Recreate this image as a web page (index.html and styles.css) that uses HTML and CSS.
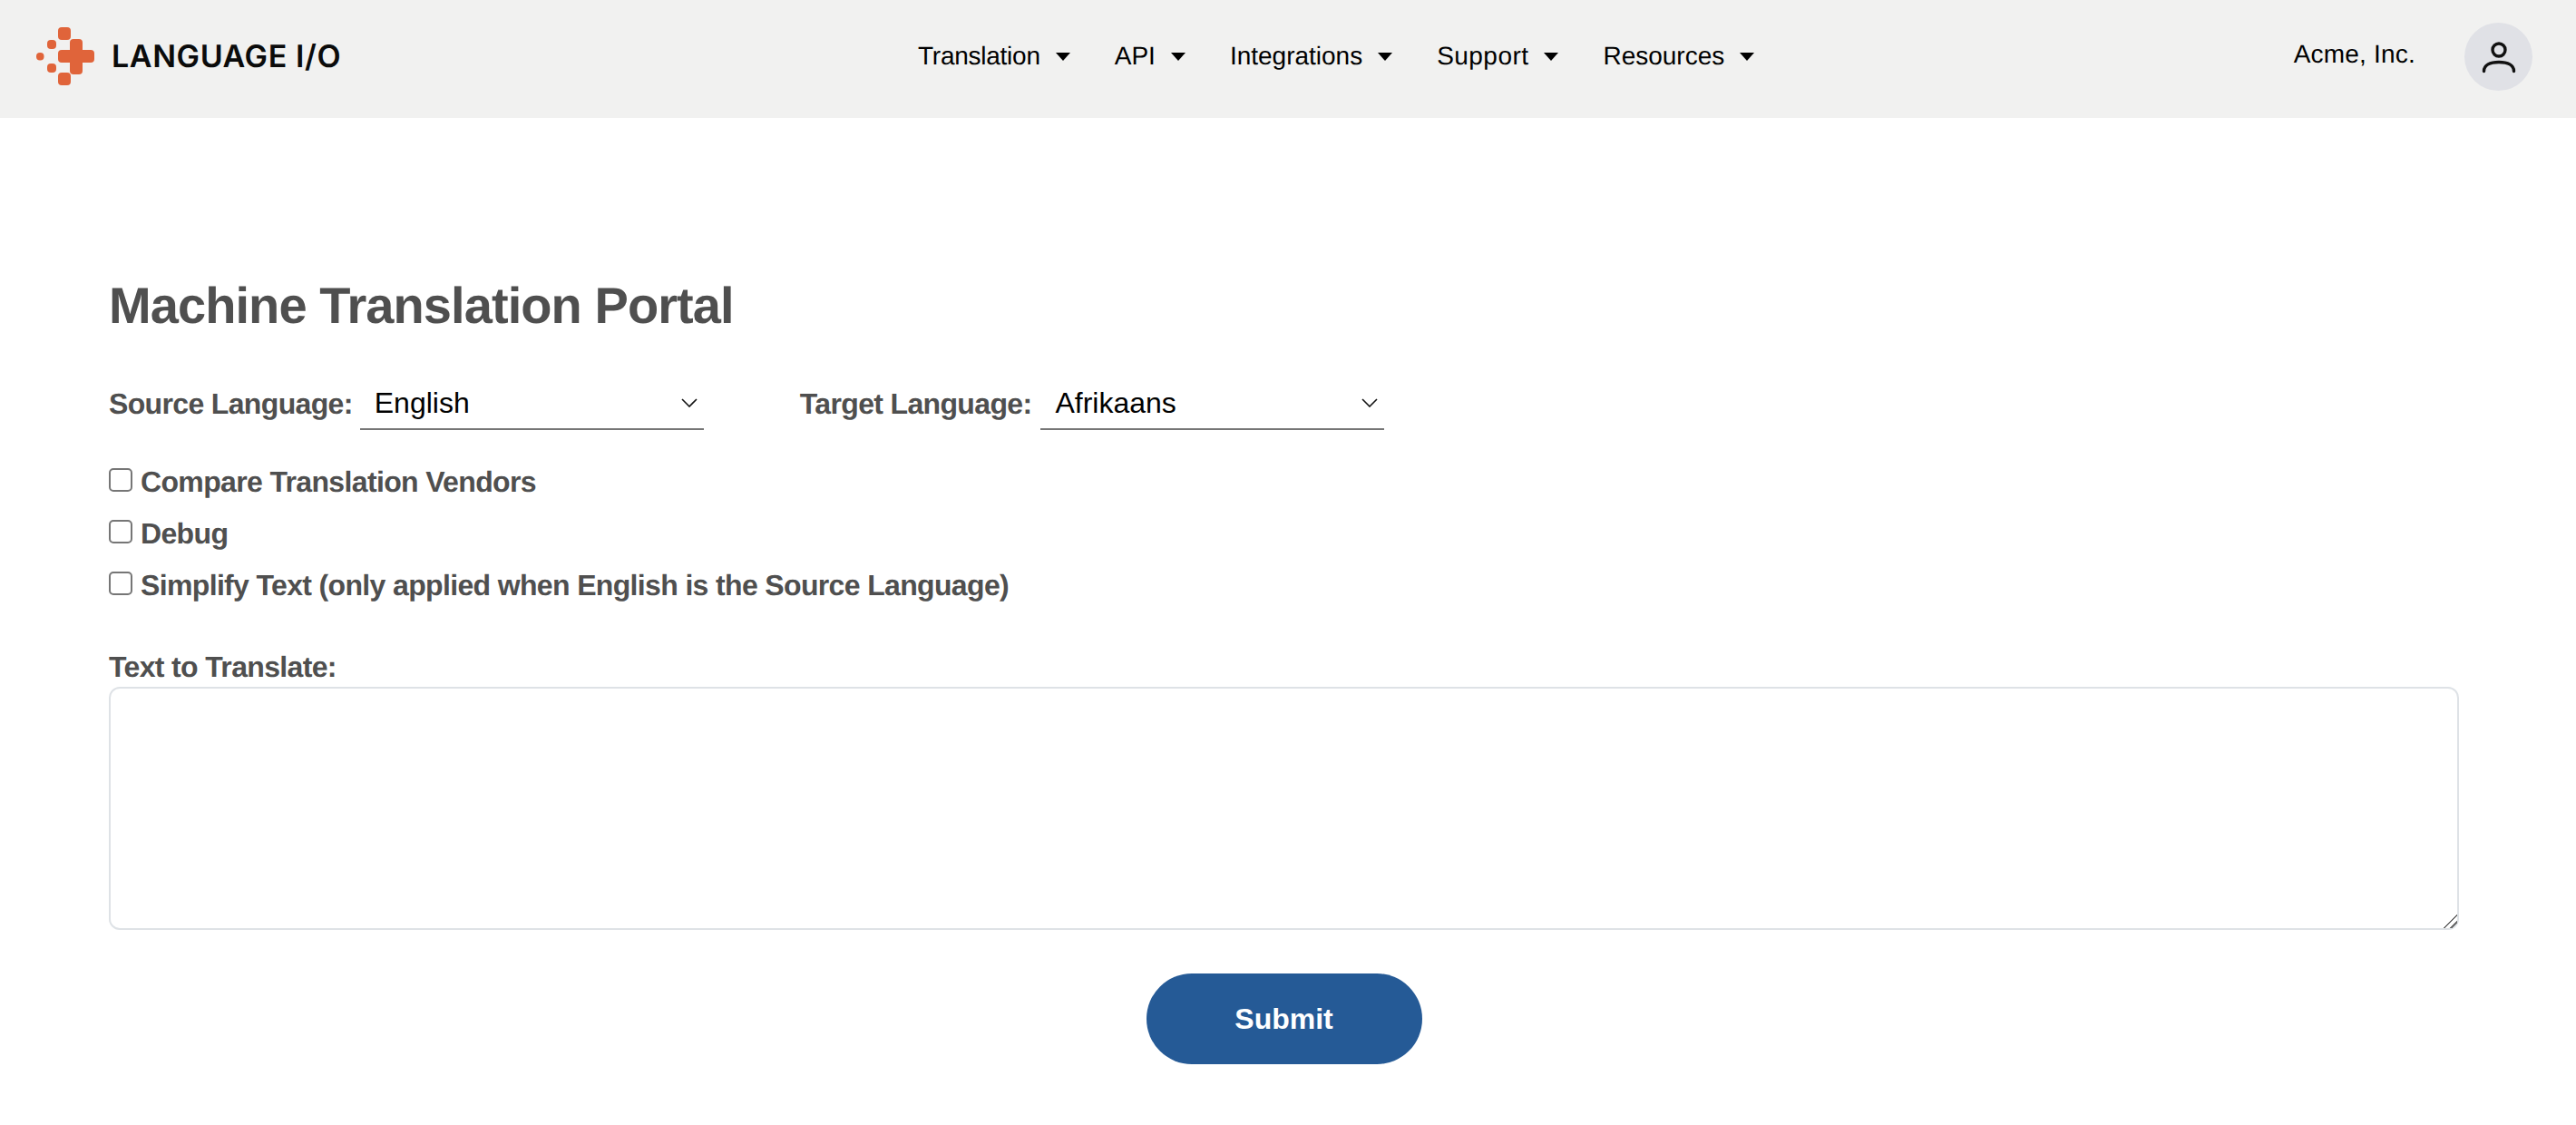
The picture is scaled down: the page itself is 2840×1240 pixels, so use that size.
FILE: index.html
```html
<!DOCTYPE html>
<html lang="en">
<head>
<meta charset="utf-8">
<title>Machine Translation Portal</title>
<link rel="stylesheet" href="styles.css">
</head>
<body>
<header class="topbar">
  <a class="brand" href="#">
    <svg class="brand-mark" width="64" height="64" viewBox="40 30 64 64" aria-hidden="true">
      <g fill="#e0643a">
        <rect x="64" y="30" width="14" height="14" rx="4"/>
        <rect x="64" y="80" width="14" height="14" rx="4"/>
        <rect x="77" y="43" width="14" height="39" rx="4"/>
        <rect x="64" y="55" width="40" height="14" rx="4"/>
        <rect x="52" y="44" width="10" height="10" rx="4"/>
        <rect x="52" y="70" width="10" height="10" rx="4"/>
        <rect x="40" y="58" width="8.5" height="8.5" rx="4"/>
      </g>
    </svg>
    <span class="brand-name">LANGUAGE I/O</span>
  </a>
  <nav class="nav">
    <a class="nav-item nav-item-tight" href="#">Translation<i class="caret"></i></a>
    <a class="nav-item" href="#">API<i class="caret"></i></a>
    <a class="nav-item" href="#">Integrations<i class="caret"></i></a>
    <a class="nav-item nav-item-wide" href="#">Support<i class="caret"></i></a>
    <a class="nav-item" href="#">Resources<i class="caret"></i></a>
  </nav>
  <div class="account">
    <span class="org">Acme, Inc.</span>
    <span class="avatar">
      <svg width="40" height="40" viewBox="0 0 40 40" fill="none" stroke="#111" stroke-width="3.4" stroke-linecap="round" aria-hidden="true">
        <circle cx="20" cy="13" r="7"/>
        <path d="M3.5 36.5C3.5 30 10 26.5 20 26.5S36.5 30 36.5 36.5"/>
      </svg>
    </span>
  </div>
</header>

<main class="content">
  <h1 class="title">Machine Translation Portal</h1>
  <form class="form">
    <div class="languages">
      <div class="field">
        <label class="label" for="src">Source Language:</label>
        <span class="select-wrap">
          <select id="src" class="select"><option>English</option></select>
          <svg class="chevron" width="18" height="10" viewBox="0 0 18 10" fill="none" stroke="#111" stroke-width="1.6"><path d="M1 1l8 8 8-8"/></svg>
        </span>
      </div>
      <div class="field">
        <label class="label" for="tgt">Target Language:</label>
        <span class="select-wrap">
          <select id="tgt" class="select"><option>Afrikaans</option></select>
          <svg class="chevron" width="18" height="10" viewBox="0 0 18 10" fill="none" stroke="#111" stroke-width="1.6"><path d="M1 1l8 8 8-8"/></svg>
        </span>
      </div>
    </div>
    <div class="options">
      <label class="option"><input class="check" type="checkbox">Compare Translation Vendors</label>
      <label class="option"><input class="check" type="checkbox">Debug</label>
      <label class="option"><input class="check" type="checkbox">Simplify Text (only applied when English is the Source Language)</label>
    </div>
    <label class="label text-label" for="text">Text to Translate:</label>
    <textarea id="text" class="textarea"></textarea>
    <div class="actions"><button class="submit" type="button">Submit</button></div>
  </form>
</main>
</body>
</html>
```

FILE: styles.css
```css
* { box-sizing: border-box; }
html, body { margin: 0; height: 100%; }
body {
  background: #fff;
  font-family: "Liberation Sans", Arial, sans-serif;
  color: #4f4f4f;
  overflow: hidden;
  text-rendering: geometricPrecision;
}
.topbar {
  display: flex;
  align-items: center;
  height: 130px;
  padding: 0 48px 6px 40px;
  background: #f1f1f0;
}
.brand {
  display: flex;
  align-items: center;
  gap: 19px;
  width: 972px;
  color: #0b0b0b;
  text-decoration: none;
  flex: none;
}
.brand-name {
  font-family: "Inter", sans-serif;
  font-size: 34px;
  font-weight: 600;
  letter-spacing: 0.6px;
  white-space: nowrap;
}
.nav { display: flex; gap: 49px; }
.nav-item {
  display: flex;
  align-items: center;
  gap: 17px;
  font-size: 28px;
  line-height: 34px;
  color: #000;
  text-decoration: none;
}
.nav-item-tight { letter-spacing: -0.25px; }
.nav-item-wide { letter-spacing: 0.45px; }
.caret {
  width: 0;
  height: 0;
  border-left: 8px solid transparent;
  border-right: 8px solid transparent;
  border-top: 9px solid #000;
}
.account { display: flex; align-items: center; gap: 54px; margin-left: auto; }
.org { font-size: 28px; line-height: 34px; letter-spacing: 0.2px; color: #000; padding-bottom: 5px; }
.avatar {
  display: flex;
  align-items: center;
  justify-content: center;
  width: 75px;
  height: 75px;
  border-radius: 50%;
  background: #e0e1e6;
}
.content { padding: 175px 129px 0 120px; }
.title {
  margin: 0 0 47px;
  font-size: 56px;
  line-height: 64px;
  font-weight: 700;
  letter-spacing: -0.92px;
  color: #4f4f4f;
}
.languages { display: flex; gap: 106px; }
.field { display: flex; align-items: center; gap: 8px; }
.field + .field { gap: 10px; }
.label { font-size: 32px; font-weight: 700; line-height: 38px; letter-spacing: -0.65px; color: #4f4f4f; }
.select-wrap { position: relative; display: block; width: 379px; }
.select {
  display: block;
  width: 100%;
  height: 58px;
  padding: 0 16px;
  appearance: none;
  border: 0;
  border-bottom: 2px solid #767676;
  border-radius: 0;
  background: transparent;
  font: 32px "Liberation Sans", Arial, sans-serif;
  color: #000;
}
.chevron { position: absolute; right: 7px; top: 23px; pointer-events: none; }
.options { display: flex; flex-direction: column; gap: 19px; margin-top: 38px; }
.option {
  display: flex;
  align-items: center;
  gap: 9px;
  font-size: 32px;
  font-weight: 700;
  line-height: 38px;
  letter-spacing: -0.65px;
  color: #4f4f4f;
}
.check {
  width: 26px;
  height: 26px;
  margin: -4px 0 0;
  appearance: none;
  background: #fff;
  border: 2px solid #767676;
  border-radius: 5px;
  flex: none;
}
.text-label { display: block; margin-top: 52px; }
.textarea {
  display: block;
  width: 100%;
  height: 268px;
  margin-top: 3px;
  border: 2px solid #dee2e6;
  border-radius: 12px;
  background: #fff;
  resize: both;
  outline: none;
}
.textarea::-webkit-resizer {
  background: linear-gradient(135deg, transparent 0 47%, #6b6b6b 47% 56%, transparent 56% 72%, #6b6b6b 72% 81%, transparent 81%);
}
.actions { display: flex; justify-content: center; margin-top: 48px; }
.submit {
  width: 304px;
  height: 100px;
  border: 0;
  border-radius: 50px;
  background: #255a96;
  color: #fff;
  font: 700 32px "Liberation Sans", Arial, sans-serif;
}
```
